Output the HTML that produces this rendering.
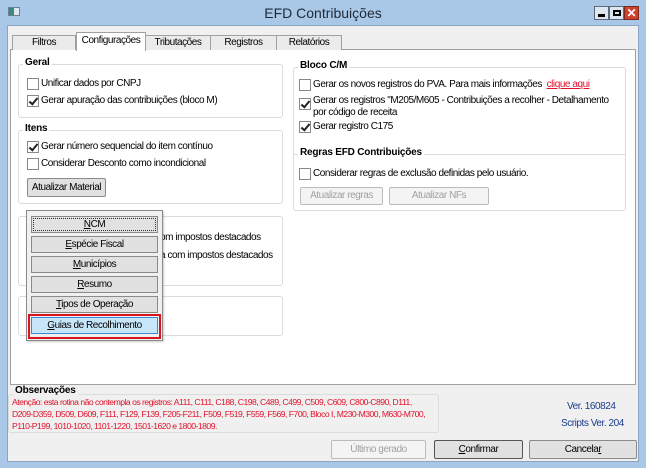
<!DOCTYPE html>
<html><head><meta charset="utf-8"><style>
*{box-sizing:border-box;margin:0;padding:0}
body{width:646px;height:468px;overflow:hidden;background:#a9c7e6;font-family:"Liberation Sans",sans-serif;font-size:10px;letter-spacing:-0.45px;color:#000;position:relative;white-space:nowrap}
.a{position:absolute;white-space:nowrap}
.win{position:absolute;left:7px;top:25px;width:632px;height:437px;background:#f0f0f0;border:1px solid #8aa6c4}
.tab{position:absolute;top:35px;height:15px;border:1px solid #a0a0a0;border-bottom:none;background:#ebebeb;text-align:center;line-height:14px}
.panel{position:absolute;left:10px;top:49px;width:626px;height:336px;background:#fff;border:1px solid #a0a0a0}
.grp{position:absolute;border:1px solid #dcdcdc;border-radius:3px;background:#fff}
.gt{position:absolute;font-weight:bold;background:#fff;padding:0 2px;letter-spacing:-0.2px}
.cb{position:absolute;width:12px;height:12px;border:1px solid #888;background:#fff}
.cb.c::after{content:"";position:absolute;left:3px;top:0px;width:3px;height:7px;border:solid #222;border-width:0 2px 2px 0;transform:rotate(40deg)}
.btn{position:absolute;border:1px solid #8a8a8a;background:linear-gradient(#f2f2f2,#e0e0e0);text-align:center;border-radius:2px}
.dis{color:#a0a0a0;border-color:#bcbcbc;background:#f4f4f4}
.pb{position:absolute;left:31px;width:127px;height:17px;border:1px solid #8a8a8a;background:#e1e1e1;text-align:center;line-height:15px}
.red{color:#e0102a}
</style></head><body>
<div class="a" style="left:8px;top:7px;width:12px;height:9px;border:1px solid #6a7f95;background:linear-gradient(90deg,#3a8a7a 50%,#dfe8f0 50%)"></div>
<div class="a" style="left:0;width:646px;top:5px;text-align:center;font-size:14px;letter-spacing:0;color:#1e2a3a">EFD Contribuições</div>
<div class="a" style="left:594px;top:6px;width:15px;height:14px;border:1px solid #5a6a7a;background:#dde6ef"><div style="position:absolute;left:3px;top:7px;width:7px;height:3px;background:#000"></div></div>
<div class="a" style="left:609px;top:6px;width:15px;height:14px;border:1px solid #5a6a7a;background:#dde6ef"><div style="position:absolute;left:3px;top:3px;width:8px;height:6px;border:2px solid #000"></div></div>
<div class="a" style="left:624px;top:6px;width:15px;height:14px;border:1px solid #7a2a1a;background:#d0402a;color:#fff;font-weight:bold;text-align:center;line-height:12px;font-size:12px;letter-spacing:0">✕</div>
<div class="win"></div>
<div class="panel"></div>
<div class="tab" style="left:12px;width:64px">Filtros</div>
<div class="tab" style="left:145px;width:66px">Tributações</div>
<div class="tab" style="left:210px;width:67px">Registros</div>
<div class="tab" style="left:276px;width:66px">Relatórios</div>
<div class="tab" style="left:76px;width:70px;top:32px;height:19px;background:#fff;z-index:2;line-height:16px">Configurações</div>

<div class="grp" style="left:18px;top:64px;width:265px;height:54px"></div>
<div class="gt" style="left:23px;top:57px">Geral</div>
<div class="cb" style="left:27px;top:78px"></div><div class="a" style="left:41px;top:78px">Unificar dados por CNPJ</div>
<div class="cb c" style="left:27px;top:95px"></div><div class="a" style="left:41px;top:95px">Gerar apuração das contribuições (bloco M)</div>

<div class="grp" style="left:18px;top:130px;width:265px;height:74px"></div>
<div class="gt" style="left:23px;top:123px">Itens</div>
<div class="cb c" style="left:27px;top:141px"></div><div class="a" style="left:41px;top:141px">Gerar número sequencial do item contínuo</div>
<div class="cb" style="left:27px;top:158px"></div><div class="a" style="left:41px;top:158px">Considerar Desconto como incondicional</div>
<div class="btn" style="left:27px;top:178px;width:79px;height:19px;line-height:17px;background:#e1e1e1">Atualizar Material</div>

<div class="grp" style="left:18px;top:216px;width:265px;height:70px"></div>
<div class="a" style="left:160px;top:232px">om impostos destacados</div>
<div class="a" style="left:160px;top:250px">a com impostos destacados</div>
<div class="grp" style="left:18px;top:296px;width:265px;height:40px"></div>

<div class="grp" style="left:293px;top:67px;width:333px;height:144px"></div>
<div class="gt" style="left:298px;top:60px">Bloco C/M</div>
<div class="cb" style="left:299px;top:79px"></div><div class="a" style="left:313px;top:79px">Gerar os novos registros do PVA. Para mais informações &nbsp;<span class="red" style="text-decoration:underline">clique aqui</span></div>
<div class="cb c" style="left:299px;top:98px"></div><div class="a" style="left:313px;top:95px;line-height:12px">Gerar os registros "M205/M605 - Contribuições a recolher - Detalhamento<br>por código de receita</div>
<div class="cb c" style="left:299px;top:121px"></div><div class="a" style="left:313px;top:121px">Gerar registro C175</div>
<div class="a" style="left:293px;top:154px;width:333px;border-top:1px solid #dcdcdc"></div>
<div class="gt" style="left:298px;top:147px">Regras EFD Contribuições</div>
<div class="cb" style="left:299px;top:168px"></div><div class="a" style="left:313px;top:168px">Considerar regras de exclusão definidas pelo usuário.</div>
<div class="btn dis" style="left:300px;top:187px;width:83px;height:18px;line-height:16px">Atualizar regras</div>
<div class="btn dis" style="left:389px;top:187px;width:100px;height:18px;line-height:16px">Atualizar NFs</div>

<div class="a" style="left:26px;top:210px;width:137px;height:131px;background:#f0f0f0;border:1px solid #8a8a8a;box-shadow:1px 1px 2px rgba(0,0,0,.2)"></div>
<div class="pb" style="top:216px;outline:1px dotted #333;outline-offset:-3px"><u>N</u>CM</div>
<div class="pb" style="top:236px"><u>E</u>spécie Fiscal</div>
<div class="pb" style="top:256px"><u>M</u>unicípios</div>
<div class="pb" style="top:276px"><u>R</u>esumo</div>
<div class="pb" style="top:296px"><u>T</u>ipos de Operação</div>
<div class="a" style="left:28px;top:314px;width:133px;height:25px;border:2px solid #d8141e"></div>
<div class="pb" style="top:317px;left:31px;background:#c8e6fa;border-color:#3c8ad0"><u>G</u>uias de Recolhimento</div>

<div class="a" style="left:8px;top:394px;width:431px;height:39px;border:1px solid #dcdcdc;border-radius:3px"></div>
<div class="gt" style="left:13px;top:385px;background:#f0f0f0">Observações</div>
<div class="a red" style="left:12px;top:396px;line-height:12px;font-size:8.6px;letter-spacing:-0.5px">Atenção: esta rotina não contempla os registros: A111, C111, C188, C198, C489, C499, C509, C609, C800-C890, D111,<br>D209-D359, D509, D609, F111, F129, F139, F205-F211, F509, F519, F559, F569, F700, Bloco I, M230-M300, M630-M700,<br>P110-P199, 1010-1020, 1101-1220, 1501-1620 e 1800-1809.</div>
<div class="a" style="left:567px;top:401px;color:#1a3c8c">Ver. 160824</div>
<div class="a" style="left:561px;top:418px;color:#1a3c8c">Scripts Ver. 204</div>
<div class="btn dis" style="left:331px;top:440px;width:95px;height:19px;line-height:17px">Último gerado</div>
<div class="btn" style="left:434px;top:440px;width:89px;height:19px;line-height:17px;background:#e1e1e1;border-color:#555"><u>C</u>onfirmar</div>
<div class="btn" style="left:529px;top:440px;width:108px;height:19px;line-height:17px;background:#e1e1e1">Cancela<u>r</u></div>
</body></html>
